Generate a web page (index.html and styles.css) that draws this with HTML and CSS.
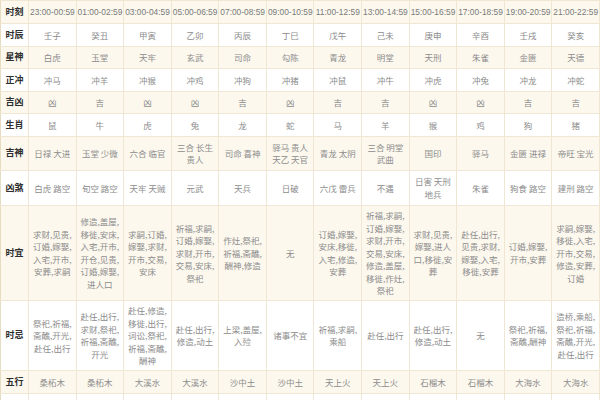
FILE: index.html
```html
<!DOCTYPE html>
<html lang="zh-CN">
<head>
<meta charset="utf-8">
<link rel="stylesheet" href="styles.css">
</head>
<body>
<table class="almanac">
<colgroup><col class="c-label"><col><col><col><col><col><col><col><col><col><col><col><col></colgroup>
<tbody>
<tr class="r-head cream"><th>时刻</th><td>23:00-00:59</td><td>01:00-02:59</td><td>03:00-04:59</td><td>05:00-06:59</td><td>07:00-08:59</td><td>09:00-10:59</td><td>11:00-12:59</td><td>13:00-14:59</td><td>15:00-16:59</td><td>17:00-18:59</td><td>19:00-20:59</td><td>21:00-22:59</td></tr>
<tr class="r-s"><th>时辰</th><td>壬子</td><td>癸丑</td><td>甲寅</td><td>乙卯</td><td>丙辰</td><td>丁巳</td><td>戊午</td><td>己未</td><td>庚申</td><td>辛酉</td><td>壬戌</td><td>癸亥</td></tr>
<tr class="r-s cream"><th>星神</th><td>白虎</td><td>玉堂</td><td>天牢</td><td>玄武</td><td>司命</td><td>勾陈</td><td>青龙</td><td>明堂</td><td>天刑</td><td>朱雀</td><td>金匮</td><td>天德</td></tr>
<tr class="r-s"><th>正冲</th><td>冲马</td><td>冲羊</td><td>冲猴</td><td>冲鸡</td><td>冲狗</td><td>冲猪</td><td>冲鼠</td><td>冲牛</td><td>冲虎</td><td>冲兔</td><td>冲龙</td><td>冲蛇</td></tr>
<tr class="r-s cream"><th>吉凶</th><td>凶</td><td>吉</td><td>凶</td><td>凶</td><td>吉</td><td>凶</td><td>吉</td><td>吉</td><td>凶</td><td>凶</td><td>吉</td><td>吉</td></tr>
<tr class="r-s"><th>生肖</th><td>鼠</td><td>牛</td><td>虎</td><td>兔</td><td>龙</td><td>蛇</td><td>马</td><td>羊</td><td>猴</td><td>鸡</td><td>狗</td><td>猪</td></tr>
<tr class="r-m cream"><th>吉神</th><td>日禄 大进</td><td>玉堂 少微</td><td>六合 临官</td><td>三合 长生<br>贵人</td><td>司命 喜神</td><td>驿马 贵人<br>天乙 天官</td><td>青龙 太阴</td><td>三合 明堂<br>武曲</td><td>国印</td><td>驿马</td><td>金匮 进禄</td><td>帝旺 宝光</td></tr>
<tr class="r-m2"><th>凶煞</th><td>白虎 路空</td><td>旬空 路空</td><td>天牢 天贼</td><td>元武</td><td>天兵</td><td>日破</td><td>六戊 雷兵</td><td>不遇</td><td>日害 天刑<br>地兵</td><td>朱雀</td><td>狗食 路空</td><td>建刑 路空</td></tr>
<tr class="r-yi cream"><th>时宜</th>
<td>求财,见贵,<br>订婚,嫁娶,<br>入宅,开市,<br>安葬,求嗣</td>
<td>修造,盖屋,<br>移徙,安床,<br>入宅,开市,<br>开仓,见贵,<br>订婚,嫁娶,<br>进人口</td>
<td>求嗣,订婚,<br>嫁娶,求财,<br>开市,交易,<br>安床</td>
<td>祈福,求嗣,<br>订婚,嫁娶,<br>求财,开市,<br>交易,安床,<br>祭祀</td>
<td>作灶,祭祀,<br>祈福,斋醮,<br>酬神,修造</td>
<td>无</td>
<td>订婚,嫁娶,<br>安床,移徙,<br>入宅,修造,<br>安葬</td>
<td>祈福,求嗣,<br>订婚,嫁娶,<br>求财,开市,<br>交易,安床,<br>修造,盖屋,<br>移徙,作灶,<br>祭祀</td>
<td>求财,见贵,<br>嫁娶,进人<br>口,移徙,安<br>葬</td>
<td>赴任,出行,<br>见贵,求财,<br>嫁娶,入宅,<br>移徙,安葬</td>
<td>订婚,嫁娶,<br>开市,安葬</td>
<td>求嗣,嫁娶,<br>移徙,入宅,<br>开市,交易,<br>修造,安葬,<br>订婚</td>
</tr>
<tr class="r-ji"><th>时忌</th>
<td>祭祀,祈福,<br>斋醮,开光,<br>赴任,出行</td>
<td>赴任,出行,<br>求财,祭祀,<br>祈福,斋醮,<br>开光</td>
<td>赴任,修造,<br>移徙,出行,<br>词讼,祭祀,<br>祈福,斋醮,<br>酬神</td>
<td>赴任,出行,<br>修造,动土</td>
<td>上梁,盖屋,<br>入殓</td>
<td>诸事不宜</td>
<td>祈福,求嗣,<br>乘船</td>
<td>赴任,出行</td>
<td>赴任,出行,<br>修造,动土</td>
<td>无</td>
<td>祭祀,祈福,<br>斋醮,酬神</td>
<td>造桥,乘船,<br>祭祀,祈福,<br>斋醮,开光,<br>赴任,出行</td>
</tr>
<tr class="r-s cream"><th>五行</th><td>桑柘木</td><td>桑柘木</td><td>大溪水</td><td>大溪水</td><td>沙中土</td><td>沙中土</td><td>天上火</td><td>天上火</td><td>石榴木</td><td>石榴木</td><td>大海水</td><td>大海水</td></tr>
<tr class="r-s"><th></th><td></td><td></td><td></td><td></td><td></td><td></td><td></td><td></td><td></td><td></td><td></td><td></td></tr>
</tbody>
</table>
</body>
</html>
```

FILE: styles.css
```css
html, body {
  margin: 0;
  padding: 0;
  background: #ffffff;
}

.almanac {
  width: 600px;
  table-layout: fixed;
  border-collapse: collapse;
  font-family: "Noto Sans CJK SC", "Liberation Sans", sans-serif;
  font-size: 8.5px;
  line-height: 12.5px;
  color: #8c8c8c;
}

.c-label {
  width: 28px;
}

.almanac th,
.almanac td {
  border: 1px solid #efe7d3;
  padding: 0 1px;
  text-align: center;
  vertical-align: middle;
  overflow: hidden;
  white-space: nowrap;
}

.almanac th {
  font-weight: 700;
  font-size: 9px;
  color: #2e2e2e;
  border-left: 1px solid #e6dcc2;
}

.cream th,
.cream td {
  background: #fcf8ee;
}

.r-head td {
  font-family: "Liberation Sans", "Noto Sans CJK SC", sans-serif;
  font-size: 8.4px;
  color: #7a7a7a;
  letter-spacing: 0;
}

.r-head { height: 23px; }
.r-s { height: 22.6px; }
.r-m { height: 34px; }
.r-m2 { height: 35px; }
.r-yi { height: 95px; }
.r-ji { height: 70px; }
```
